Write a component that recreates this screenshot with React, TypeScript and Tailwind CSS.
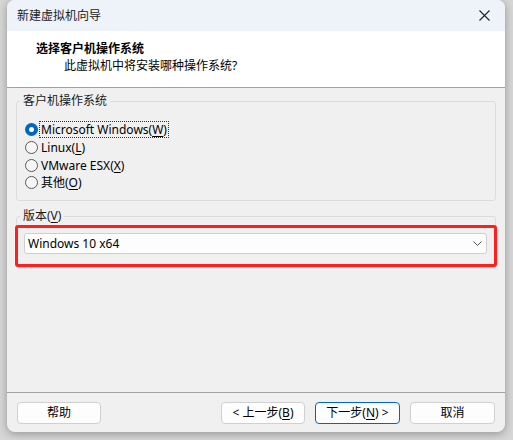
import React from "react";

const font = { fontFamily: '"Segoe UI", "Noto Sans", "Noto Sans CJK SC", sans-serif' };

function U({ children }: { children: React.ReactNode }) {
  return <span className="underline underline-offset-2">{children}</span>;
}

function Radio({ checked, children, focus }: { checked?: boolean; children: React.ReactNode; focus?: boolean }) {
  return (
    <div className="flex items-center h-[17.7px]">
      {checked ? (
        <span className="w-[13px] h-[13px] rounded-full bg-[#0067c0] flex items-center justify-center">
          <span className="w-[5px] h-[5px] rounded-full bg-white" />
        </span>
      ) : (
        <span className="w-[13px] h-[13px] rounded-full border border-[#5a5a5a] bg-[#f6f6f6]" />
      )}
      <span className={"ml-[2px] px-px leading-[15px] " + (focus ? "outline outline-1 outline-dotted outline-[#333]" : "")}>
        {children}
      </span>
    </div>
  );
}

function Btn({ children, w, primary }: { children: React.ReactNode; w: string; primary?: boolean }) {
  return (
    <div
      className={
        "h-[22px] flex items-center justify-center rounded-[4px] bg-[#fdfdfd] " +
        w +
        (primary ? " border border-[#0067c0]" : " border border-[#d0d0d0]")
      }
    >
      {children}
    </div>
  );
}

export default function App() {
  return (
    <div className="w-[513px] h-[440px] bg-[#d6d6d6] pl-[7px] overflow-hidden text-[12px] text-black" style={font}>
      <div className="w-[498px] h-[432px] rounded-lg bg-[#f0f0f0] flex flex-col shadow-[0_2px_8px_rgba(0,0,0,0.3)] overflow-hidden">
        {/* title bar */}
        <div className="h-[31px] bg-[#eef2f9] flex items-center pl-[10px] pr-[10px] shrink-0">
          <span className="flex-1 text-[#1a1a1a]">新建虚拟机向导</span>
          <svg width="11" height="11" viewBox="0 0 11 11" className="mr-[5px]">
            <path d="M0.5 0.5 L10.5 10.5 M10.5 0.5 L0.5 10.5" stroke="#222" strokeWidth="1.1" />
          </svg>
        </div>
        {/* header */}
        <div className="h-[57px] bg-white border-b border-[#a0a0a0] shrink-0 pt-[10px]">
          <div className="pl-[29px] font-bold leading-[16px]">选择客户机操作系统</div>
          <div className="pl-[57px] leading-[16px] mt-[1px]">此虚拟机中将安装哪种操作系统?</div>
        </div>
        {/* body */}
        <div className="relative flex-1 px-[9px] pt-[5px]">
          <fieldset className="border border-[#dcdcdc] rounded-[3px] h-[108px]">
            <legend className="px-[3px] ml-[3px] leading-[16px] text-[#1a1a1a]">客户机操作系统</legend>
            <div className="pt-[12px] pl-[8px]">
              <Radio checked focus>
                Microsoft Windows(<U>W</U>)
              </Radio>
              <Radio>
                Linux(<U>L</U>)
              </Radio>
              <Radio>
                VMware ESX(<U>X</U>)
              </Radio>
              <Radio>
                其他(<U>O</U>)
              </Radio>
            </div>
          </fieldset>
          <fieldset className="mt-[7px] border border-[#dcdcdc] rounded-[3px] h-[60px]">
            <legend className="px-[3px] ml-[3px] leading-[16px] text-[#1a1a1a]">
              版本(<U>V</U>)
            </legend>
            <div className="pt-[9px] pl-[7px] pr-[8px]">
              <div className="h-[21px] bg-[#fdfdfd] border border-[#cfcfcf] rounded-[3px] flex items-center pl-[3px] pr-[4px]">
                <span className="flex-1">Windows 10 x64</span>
                <svg width="9" height="5" viewBox="0 0 9 5">
                  <path d="M0.5 0.5 L4.5 4.5 L8.5 0.5" stroke="#555" strokeWidth="1" fill="none" />
                </svg>
              </div>
            </div>
          </fieldset>
          <div className="absolute left-[8px] top-[137px] w-[482px] h-[42px] border-[3px] border-[#ff1f1f] rounded-[3px]" />
        </div>
        {/* footer */}
        <div className="border-t border-[#a0a0a0] shrink-0 pt-[9px] pb-[8px] px-[10px] flex items-center">
          <Btn w="w-[84px]">帮助</Btn>
          <div className="flex-1" />
          <Btn w="w-[84px]">
            &lt; 上一步(<U>B</U>)
          </Btn>
          <div className="w-[10px]" />
          <Btn w="w-[85px]" primary>
            下一步(<U>N</U>) &gt;
          </Btn>
          <div className="w-[10px]" />
          <Btn w="w-[85px]">取消</Btn>
        </div>
      </div>
    </div>
  );
}
